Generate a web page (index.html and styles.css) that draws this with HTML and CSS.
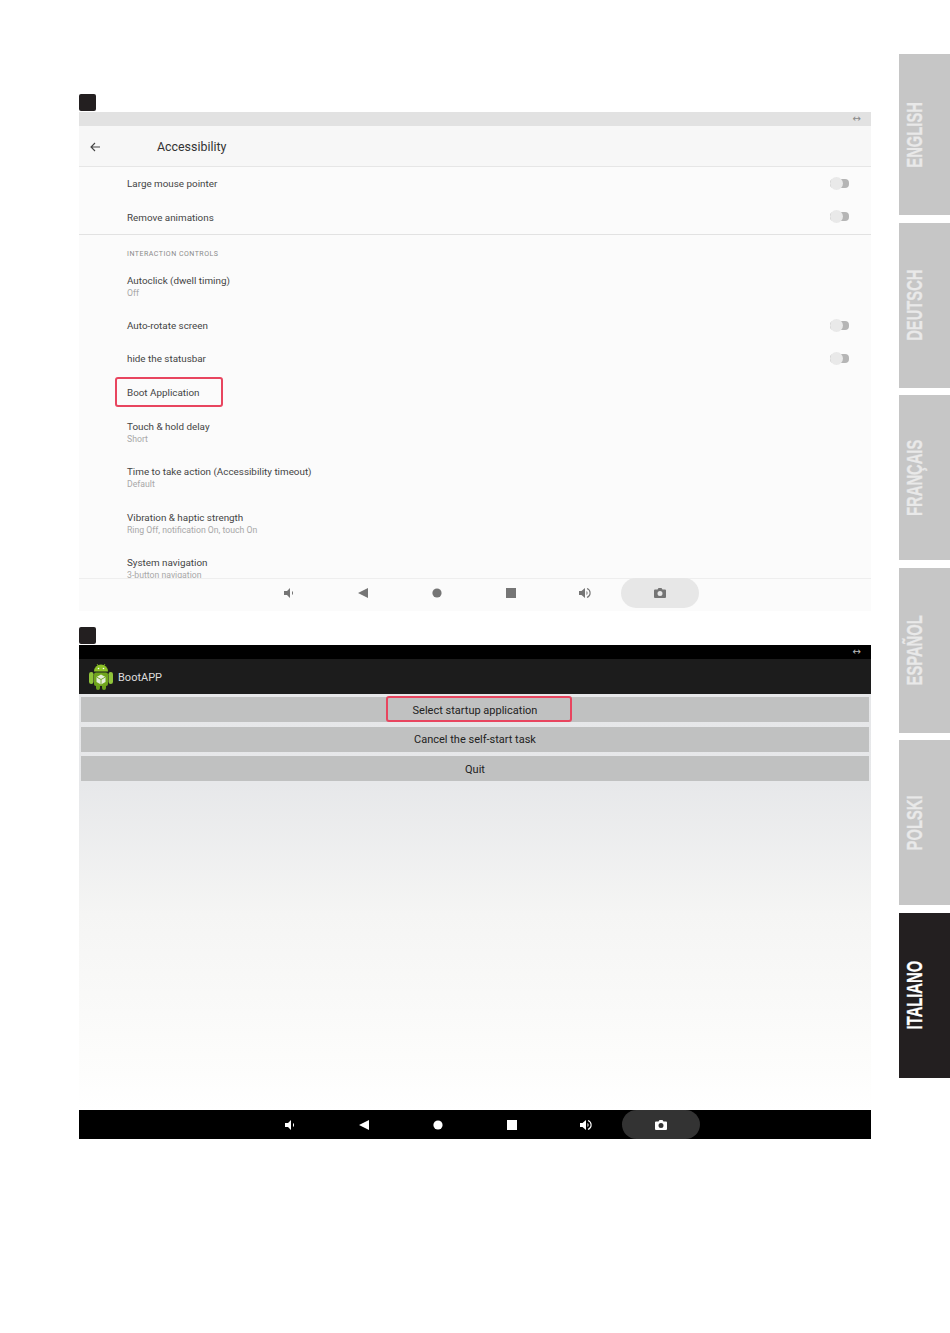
FILE: index.html
```html
<!DOCTYPE html>
<html lang="en">
<head>
    <meta charset="UTF-8">
    <meta name="viewport" content="width=device-width, initial-scale=1.0">
    <title>BootAPP - Manual</title>
    <link rel="stylesheet" href="styles.css">
</head>
<body>
    <div class="page">
        <main class="steps">
            <div class="marker"></div>
            <section class="screen screen-light">
                <div class="statusbar"><span class="arrows">&#8596;</span></div>
                <header class="appbar">
                    <svg class="back-icon" viewBox="0 0 12 12"><path d="M11 6H2M6 2L2 6l4 4" fill="none" stroke="#444" stroke-width="1.1"/></svg>
                    <h1>Accessibility</h1>
                </header>
                <div class="settings">
                    <div class="row row-toggle row-top"><span class="row-title">Large mouse pointer</span><span class="toggle"></span></div>
                    <div class="row row-toggle row-top"><span class="row-title">Remove animations</span><span class="toggle"></span></div>
                    <hr class="divider">
                    <div class="group-label">INTERACTION CONTROLS</div>
                    <div class="row row-double"><span class="row-title">Autoclick (dwell timing)</span><span class="row-sub">Off</span></div>
                    <div class="row row-toggle"><span class="row-title">Auto-rotate screen</span><span class="toggle"></span></div>
                    <div class="row row-toggle"><span class="row-title">hide the statusbar</span><span class="toggle"></span></div>
                    <div class="row row-single"><span class="row-title">Boot Application</span><span class="highlight highlight-boot"></span></div>
                    <div class="row row-double"><span class="row-title">Touch &amp; hold delay</span><span class="row-sub">Short</span></div>
                    <div class="row row-double"><span class="row-title">Time to take action (Accessibility timeout)</span><span class="row-sub">Default</span></div>
                    <div class="row row-double"><span class="row-title">Vibration &amp; haptic strength</span><span class="row-sub">Ring Off, notification On, touch On</span></div>
                    <div class="row row-double"><span class="row-title">System navigation</span><span class="row-sub">3-button navigation</span></div>
                </div>
                <nav class="navbar">
                    <svg class="nav-icon" viewBox="0 0 14 14"><path d="M2 5h3l3-3v10L5 9H2z"/><path d="M10 5v4a2.4 2.4 0 0 0 0-4z"/></svg>
                    <svg class="nav-icon" viewBox="0 0 14 14"><path d="M12 2v10L2 7z"/></svg>
                    <svg class="nav-icon" viewBox="0 0 14 14"><circle cx="7" cy="7" r="4.6"/></svg>
                    <svg class="nav-icon" viewBox="0 0 14 14"><rect x="2" y="2" width="10" height="10"/></svg>
                    <svg class="nav-icon" viewBox="0 0 14 14"><path d="M1 5h2.5L7 2v10L3.5 9H1z"/><path d="M8.5 5v4a2.4 2.4 0 0 0 0-4z"/><path class="nav-wave" d="M9 2.5a4.8 4.8 0 0 1 0 9"/></svg>
                    <span class="camera-pill">
                        <svg class="nav-icon" viewBox="0 0 14 14"><path fill-rule="evenodd" d="M2 3.5h2.5L5.5 2h3l1 1.5H12a1 1 0 0 1 1 1V11a1 1 0 0 1-1 1H2a1 1 0 0 1-1-1V4.500a1 1 0 0 1 1-1zM7 5a2.500 2.500 0 1 0 0 5 2.500 2.500 0 0 0 0-5z"/></svg>
                    </span>
                </nav>
            </section>

            <div class="marker"></div>
            <section class="screen screen-dark">
                <div class="statusbar"><span class="arrows">&#8596;</span></div>
                <header class="appbar">
                    <svg class="app-logo" viewBox="0 0 24 27">
                        <rect x="0" y="9" width="4.5" height="12" rx="2.2" fill="#8fc43a"/>
                        <rect x="19.5" y="9" width="4.5" height="12" rx="2.2" fill="#8fc43a"/>
                        <rect x="7" y="20" width="4" height="7" rx="2" fill="#6a9f1c"/>
                        <rect x="13" y="20" width="4" height="7" rx="2" fill="#6a9f1c"/>
                        <path d="M5 8.5a7 7 0 0 1 14 0z" fill="#8cc227"/>
                        <path d="M8 1l2 3M16 1l-2 3" stroke="#8cc227" stroke-width=".8"/>
                        <circle cx="9.5" cy="5.5" r=".8" fill="#fff"/>
                        <circle cx="14.5" cy="5.5" r=".8" fill="#fff"/>
                        <rect x="5" y="9.5" width="14" height="13.5" rx="2" fill="#6fa51c"/>
                        <path d="M12 11.5l4.5 2.5v5L12 21.5 7.5 19v-5z" fill="#e6eedb"/>
                        <path d="M7.5 14l4.5 2.5 4.5-2.5M12 16.5v5" fill="none" stroke="#6fa51c" stroke-width=".9"/>
                    </svg>
                    <h1>BootAPP</h1>
                </header>
                <div class="boot-content">
                    <div class="boot-button"><span class="boot-label">Select startup application<span class="highlight highlight-select"></span></span></div>
                    <div class="boot-button"><span class="boot-label">Cancel the self-start task</span></div>
                    <div class="boot-button"><span class="boot-label">Quit</span></div>
                </div>
                <nav class="navbar">
                    <svg class="nav-icon" viewBox="0 0 14 14"><path d="M2 5h3l3-3v10L5 9H2z"/><path d="M10 5v4a2.4 2.4 0 0 0 0-4z"/></svg>
                    <svg class="nav-icon" viewBox="0 0 14 14"><path d="M12 2v10L2 7z"/></svg>
                    <svg class="nav-icon" viewBox="0 0 14 14"><circle cx="7" cy="7" r="4.6"/></svg>
                    <svg class="nav-icon" viewBox="0 0 14 14"><rect x="2" y="2" width="10" height="10"/></svg>
                    <svg class="nav-icon" viewBox="0 0 14 14"><path d="M1 5h2.5L7 2v10L3.5 9H1z"/><path d="M8.5 5v4a2.4 2.4 0 0 0 0-4z"/><path class="nav-wave" d="M9 2.5a4.8 4.8 0 0 1 0 9"/></svg>
                    <span class="camera-pill">
                        <svg class="nav-icon" viewBox="0 0 14 14"><path fill-rule="evenodd" d="M2 3.5h2.5L5.5 2h3l1 1.5H12a1 1 0 0 1 1 1V11a1 1 0 0 1-1 1H2a1 1 0 0 1-1-1V4.500a1 1 0 0 1 1-1zM7 5a2.500 2.500 0 1 0 0 5 2.500 2.500 0 0 0 0-5z"/></svg>
                    </span>
                </nav>
            </section>
        </main>

        <aside class="lang-tabs">
            <div class="lang-tab lang-tab-first"><span>ENGLISH</span></div>
            <div class="lang-tab"><span>DEUTSCH</span></div>
            <div class="lang-tab"><span>FRANÇAIS</span></div>
            <div class="lang-tab"><span>ESPAÑOL</span></div>
            <div class="lang-tab"><span>POLSKI</span></div>
            <div class="lang-tab active"><span>ITALIANO</span></div>
        </aside>
    </div>
</body>
</html>
```

FILE: styles.css
```css
html, body {
    margin: 0;
    padding: 0;
    background: #fff;
}
body {
    font-family: Roboto, "Liberation Sans", sans-serif;
    color: #333;
}
.page {
    display: flex;
    align-items: flex-start;
    width: 950px;
    height: 1333px;
    overflow: hidden;
}
.steps {
    width: 792px;
    margin-left: 79px;
    padding-top: 94px;
}
.marker {
    width: 17px;
    height: 17px;
    background: #231f20;
    border-radius: 2px;
}
.screen {
    position: relative;
    display: flex;
    flex-direction: column;
    margin-top: 1px;
}
.statusbar {
    display: flex;
    align-items: center;
    justify-content: flex-end;
    height: 14px;
    padding-right: 10px;
}
.arrows {
    font-family: "DejaVu Sans", sans-serif;
    font-size: 10px;
    line-height: 14px;
}
.appbar {
    display: flex;
    align-items: center;
}
.appbar h1 {
    margin: 0;
    font-weight: 400;
}

/* settings screen */
.screen-light {
    height: 499px;
    margin-bottom: 16px;
    background: #fbfbfb;
}
.screen-light .statusbar {
    background: #e2e2e2;
    color: #8a8a8a;
}
.screen-light .appbar {
    height: 41px;
    padding-top: 1px;
    background: #f7f7f7;
    border-bottom: 1px solid #e6e6e6;
    box-sizing: border-box;
}
.back-icon {
    width: 12px;
    height: 12px;
    margin-left: 10px;
}
.screen-light .appbar h1 {
    margin-left: 56px;
    font-size: 12.4px;
    color: #333;
}
.settings {
    flex: 1;
    min-height: 0;
    overflow: hidden;
}
.row {
    position: relative;
    display: flex;
    justify-content: center;
    flex-direction: column;
    padding-left: 48px;
    padding-right: 22px;
}
.row-toggle, .row-single {
    height: 33.5px;
}
.row-toggle {
    flex-direction: row;
    align-items: center;
    justify-content: space-between;
}
.row-top .toggle {
    margin-bottom: 1px;
}
.row-double {
    height: 45.5px;
    padding-top: 2px;
    box-sizing: border-box;
}
.row-title {
    font-size: 9.85px;
    line-height: 13px;
    color: #444;
}
.row-sub {
    font-size: 8.7px;
    line-height: 13px;
    color: #a8a8a8;
}
.toggle {
    position: relative;
    width: 19px;
    height: 9px;
    background: #b5b5b5;
    border-radius: 4px;
}
.toggle::before {
    content: "";
    position: absolute;
    left: 0;
    top: -2px;
    width: 13px;
    height: 13px;
    background: #e9e9e9;
    border-radius: 50%;
}
.divider {
    height: 1px;
    margin: 0;
    border: 0;
    background: #e2e2e2;
}
.group-label {
    height: 14px;
    margin-top: 12px;
    margin-bottom: 2px;
    padding-left: 48px;
    font-size: 7px;
    line-height: 14px;
    letter-spacing: 0.5px;
    color: #8a8a8a;
}
.highlight {
    position: absolute;
    border: 2px solid #e8455f;
    border-radius: 3px;
    box-sizing: border-box;
}
.highlight-boot {
    left: 36px;
    top: 1px;
    width: 108px;
    height: 30px;
}
.navbar {
    position: relative;
    display: flex;
    align-items: center;
    gap: 60px;
    padding-left: 203px;
    box-sizing: border-box;
}
.screen-light .navbar {
    height: 33px;
    padding-bottom: 4px;
    background: #fbfbfb;
    border-top: 1px solid #eeeeee;
}
.nav-icon {
    width: 14px;
    height: 14px;
    flex: none;
}
.screen-light .nav-icon {
    fill: #757575;
    stroke: #757575;
    stroke-width: 0;
}
.camera-pill {
    display: flex;
    align-items: center;
    justify-content: center;
    width: 78px;
    height: 30px;
    margin-left: -31px;
    border-radius: 15px;
}
.screen-light .camera-pill {
    background: #e7e7e7;
}

/* boot app screen */
.screen-dark {
    height: 494px;
}
.screen-dark .statusbar {
    background: #000;
    color: #bbb;
}
.screen-dark .appbar {
    height: 35px;
    background: #1c1c1c;
}
.app-logo {
    width: 24px;
    height: 27px;
    margin-left: 10px;
}
.screen-dark .appbar h1 {
    margin-left: 5px;
    padding-top: 1px;
    font-size: 11px;
    color: #ddd;
}
.boot-content {
    flex: 1;
    display: flex;
    flex-direction: column;
    gap: 4.5px;
    padding: 3px 2px 0;
    background: linear-gradient(#e6e7e9 0, #e7e8ea 90px, #f5f5f4 220px, #fdfdfc 380px, #fff 100%);
}
.boot-button {
    display: flex;
    justify-content: center;
    align-items: center;
    height: 25px;
    background: #c0c1c1;
    font-size: 11px;
    color: #222;
}
.boot-label {
    position: relative;
    top: 0.5px;
}
.highlight-select {
    left: -27px;
    top: -7.5px;
    width: 186px;
    height: 26px;
}
.screen-dark .navbar {
    height: 29px;
    padding-left: 204px;
    background: #000;
}
.screen-dark .nav-icon {
    fill: #fff;
    stroke: #fff;
    stroke-width: 0;
}
.screen-dark .camera-pill {
    height: 29px;
    background: #333;
}
.screen-light .nav-wave, .screen-dark .nav-wave {
    fill: none;
    stroke-width: 1.1;
}

/* language tabs */
.lang-tabs {
    display: flex;
    flex-direction: column;
    gap: 7.6px;
    width: 51px;
    margin-left: 28px;
    padding-top: 54px;
}
.lang-tab {
    display: flex;
    align-items: center;
    justify-content: center;
    height: 165px;
    padding-right: 19px;
    box-sizing: border-box;
    background: #c6c6c6;
    color: #e9e9e9;
}
.lang-tab-first {
    height: 161px;
}
.lang-tab span {
    writing-mode: vertical-rl;
    transform: rotate(180deg) scaleY(0.67);
    font-family: "Liberation Sans", sans-serif;
    font-weight: 700;
    font-size: 22px;
    line-height: 22px;
    -webkit-text-stroke: 0.3px currentColor;
}
.lang-tab.active {
    background: #231f20;
    color: #fff;
}
```
